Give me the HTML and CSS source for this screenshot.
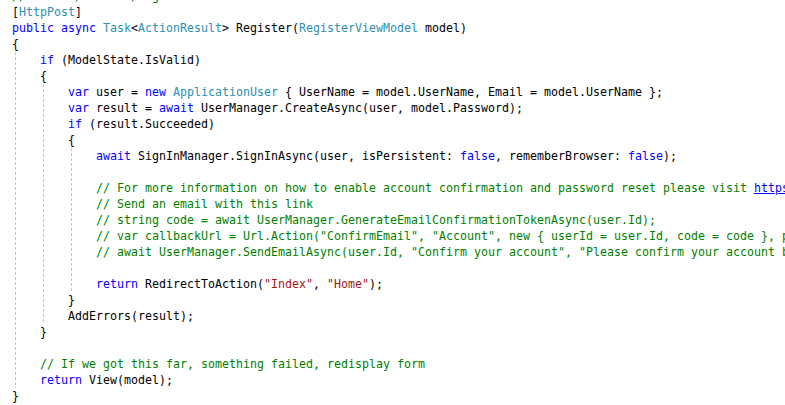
FILE: index.html
```html
<!doctype html>
<html>

<head>
	<title>AccountController.cs</title>
	<link rel="stylesheet" href="styles.css">
</head>

<body>
	<div class="editor">
		<div class="guide g1"></div>
		<div class="guide g2"></div>
		<div class="guide g3"></div>
<pre class="code"><span class="cm">// POST: /Account/Register</span>
[<span class="ty">HttpPost</span>]
<span class="kw">public</span> <span class="kw">async</span> <span class="ty">Task</span>&lt;<span class="ty">ActionResult</span>&gt; Register(<span class="ty">RegisterViewModel</span> model)
{
    <span class="kw">if</span> (ModelState.IsValid)
    {
        <span class="kw">var</span> user = <span class="kw">new</span> <span class="ty">ApplicationUser</span> { UserName = model.UserName, Email = model.UserName };
        <span class="kw">var</span> result = <span class="kw">await</span> UserManager.CreateAsync(user, model.Password);
        <span class="kw">if</span> (result.Succeeded)
        {
            <span class="kw">await</span> SignInManager.SignInAsync(user, isPersistent: <span class="kw">false</span>, rememberBrowser: <span class="kw">false</span>);

            <span class="cm">// For more information on how to enable account confirmation and password reset please visit <span class="link">https://go.microsoft.com/fwlink/?LinkID=320771</span></span>
            <span class="cm">// Send an email with this link</span>
            <span class="cm">// string code = await UserManager.GenerateEmailConfirmationTokenAsync(user.Id);</span>
            <span class="cm">// var callbackUrl = Url.Action("ConfirmEmail", "Account", new { userId = user.Id, code = code }, protocol: Request.Url.Scheme);</span>
            <span class="cm">// await UserManager.SendEmailAsync(user.Id, "Confirm your account", "Please confirm your account by clicking &lt;a href=\"" + callbackUrl + "\"&gt;here&lt;/a&gt;");</span>

            <span class="kw">return</span> RedirectToAction(<span class="str">"Index"</span>, <span class="str">"Home"</span>);
        }
        AddErrors(result);
    }

    <span class="cm">// If we got this far, something failed, redisplay form</span>
    <span class="kw">return</span> View(model);
}
</pre>
	</div>
</body>

</html>
```

FILE: styles.css
```css
html,
body {
	margin: 0;
	overflow: hidden;
	background: #ffffff;
}

.editor {
	position: relative;
	width: 785px;
	height: 405px;
	overflow: hidden;
}

.code {
	margin: -12px 0 0 12px;
	font-family: 'DejaVu Sans Mono', monospace;
	font-size: 11.63px;
	line-height: 16px;
	color: #000000;
	white-space: pre;
}

.kw {
	color: #0000ff;
}

.ty {
	color: #2b91af;
}

.str {
	color: #a31515;
}

.cm {
	color: #008000;
}

.link {
	color: #0000ff;
	text-decoration: underline;
}

/* indent guides */
.guide {
	position: absolute;
	width: 1px;
	background: repeating-linear-gradient(#c4c4c4 0 3px, transparent 3px 5px);
}

.g1 {
	left: 15px;
	top: 52px;
	height: 336px;
}

.g2 {
	left: 43px;
	top: 84px;
	height: 240px;
}

.g3 {
	left: 71px;
	top: 148px;
	height: 144px;
}
```
